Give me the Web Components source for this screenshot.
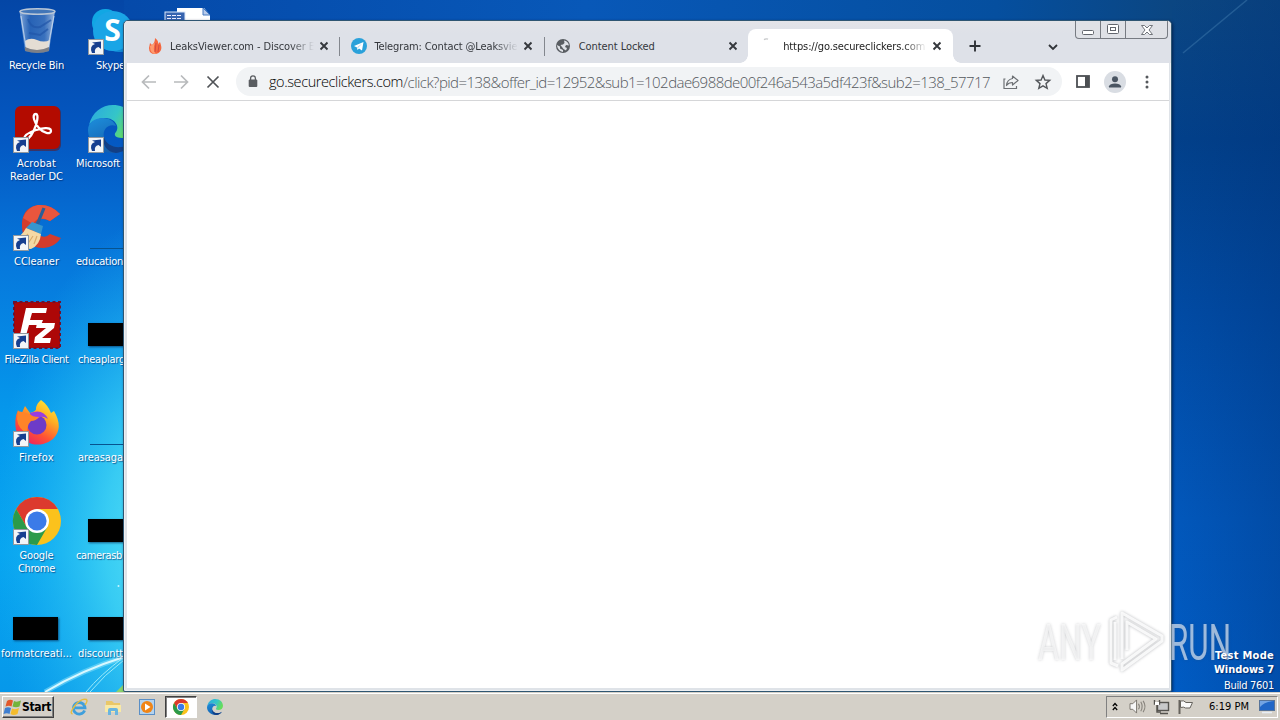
<!DOCTYPE html>
<html lang="en">
<head>
<meta charset="utf-8">
<title>Desktop</title>
<style>
  html, body { margin: 0; width: 1280px; height: 720px; overflow: hidden; }
  body { font-family: "DejaVu Sans Condensed", "DejaVu Sans", sans-serif; font-size: 11px; }
</style>
</head>
<body>
<win-desktop>
  <desktop-icons></desktop-icons>
  <browser-window slot="window"></browser-window>
  <build-mark slot="overlay"></build-mark>
  <task-bar slot="taskbar"></task-bar>
</win-desktop>

<script>
const chromeArt = `
  <circle cx="24" cy="24" r="24" fill="#fbc21c"/>
  <path d="M3.2 12A24 24 0 0 1 44.8 12H24L13.6 30Z" fill="#dc3a2e"/>
  <path d="M3.2 12A24 24 0 0 0 24 48L34.4 30 24 34 13.6 30Z" fill="#2b9a4a"/>
  <circle cx="24" cy="24" r="12" fill="#fff"/><circle cx="24" cy="24" r="9.6" fill="#3b7be8"/>`;

const edgeArt = `
  <defs>
    <linearGradient id="e1" x1="0" y1="0" x2="1" y2=".4"><stop offset="0" stop-color="#2aa8e0"/><stop offset=".6" stop-color="#35c5c8"/><stop offset="1" stop-color="#66dd5c"/></linearGradient>
    <linearGradient id="e2" x1="0" y1="0" x2=".6" y2="1"><stop offset="0" stop-color="#1d8fdc"/><stop offset="1" stop-color="#1459a8"/></linearGradient>
  </defs>
  <path d="M1 20C4 7 14 0 25 0c14 0 23 10 23 20 0 8-6 13-14 13-6 0-9-3-6-6 4-5-1-14-11-14C9 13 3 17 1 20Z" fill="url(#e1)"/>
  <path d="M0 25c0-8 7-12 15-12 6 0 11 3 13 8-7-3-14 3-12 11 2 7 9 11 17 10 5 0 9-2 12-4-5 7-12 10-20 10C11 48 0 37 0 25Z" fill="url(#e2)"/>
  <path d="M16 32c2 7 9 11 17 10 5 0 9-2 12-4-4 6-10 9-17 10-9-1-14-8-12-16Z" fill="#123f86"/>`;

// Every glyph used on the page: [viewBox, markup]
const ICONS = {
  recycle: ["0 0 48 48", `
    <defs><linearGradient id="g" x1="0" x2="1"><stop offset="0" stop-color="#b4cdec" stop-opacity=".75"/><stop offset=".3" stop-color="#3f74bd" stop-opacity=".6"/><stop offset=".7" stop-color="#5585c6" stop-opacity=".65"/><stop offset="1" stop-color="#c0d2ea" stop-opacity=".85"/></linearGradient></defs>
    <path d="M6.500 4H42L36 44Q25 48 12 44Z" fill="url(#g)"/>
    <ellipse cx="24.5" cy="4.500" rx="17.5" ry="2.800" fill="#4276b8" stroke="#b9c6d6" stroke-width="1.500"/>
    <path d="M12 34Q17 30 24 33T37 33L36 41Q25 47 13 41Z" fill="#e4ddd4"/>
    <path d="M12 40Q24 46 36 40V44Q25 48 12 44Z" fill="#7d8087"/>
    <path d="M15 12Q18 22 27 20L38 13M16 26L27 28 35 22" fill="none" stroke="#2155a8" stroke-width="2" opacity=".7"/>
    <path d="M8 9L13 40M41 9L35 40" stroke="#d3e2f3" stroke-width="1.2" opacity=".7"/>`],
  skype: ["0 0 48 48", `<rect x="4" y="2" width="27" height="27" rx="13" fill="#11a7e4"/><rect x="17" y="18" width="29" height="27" rx="13" fill="#1188d2"/><circle cx="25" cy="24" r="20" fill="#1aa5e6"/>
    <text x="24.5" y="34" text-anchor="middle" font-family="Open Sans,sans-serif" font-weight="700" font-size="30" fill="#fff">S</text>`],
  acrobat: ["0 0 48 48", `<rect x="3" y="2" width="45" height="44" rx="6" fill="#5d1a28" opacity=".6"/><rect x="2" y="1" width="45" height="43" rx="6" fill="#b30b00"/>
    <path d="M23 9c-5 0-1 10 3 14 4 5 12 7 12 3 0-5-11-2-15-1-6 2-12 5-12 9 1 4 7-2 10-9 3-6 5-16 2-16Z" fill="none" stroke="#fff" stroke-width="2.3"/>`],
  edge: ["0 0 48 48", edgeArt],
  ccleaner: ["0 0 48 48", `
    <path d="M47 11Q38 1 25 2 8 5 9 24 10 45 31 45 42 44 48 35L37 31Q33 35 28 33 20 30 22 21 26 13 37 18Z" fill="#d33c2d"/>
    <path d="M47 11Q38 1 25 2 14 4 10 15L20 21Q25 12 37 18Z" fill="#e9563d"/>
    <path d="M31 5L24 22" stroke="#285f98" stroke-width="3.2"/><path d="M19 19L30 23 28 31 13 25Z" fill="#3596cf"/>
    <path d="M13 25L28 31Q27 42 18 46 6 46 0 37 9 33 13 25Z" fill="#f5d9a4"/><path d="M15 31L8 39M20 33L14 42M24 33L21 41" stroke="#d9ab6a" stroke-width="1.2"/>`],
  filezilla: ["0 0 48 48", `<rect x="1" y="1" width="46" height="46" fill="#ad0707"/><rect x="1" y="1" width="46" height="46" fill="none" stroke="#6b1230" stroke-width="2" stroke-dasharray="3 2.5"/>
    <path d="M13 7H34L33 12H19L17 19H30L28 24H16L12 38H6Z" fill="#fff"/><path d="M24 22H42L41 27 29 37H38L37 42H21L22 36 33 27H23Z" fill="#fff"/>`],
  firefox: ["0 0 48 48", `
    <defs><linearGradient id="f" x1=".85" y1="0" x2=".25" y2="1"><stop offset="0" stop-color="#fff23d"/><stop offset=".35" stop-color="#ffae22"/><stop offset=".7" stop-color="#ff5035"/><stop offset="1" stop-color="#e91e68"/></linearGradient></defs>
    <path d="M28 1Q35 6 38 14L41 12Q51 29 40 40A23 22 0 0 1 3 31Q1 20 5 11L8 16 12 7 17 14Q24 12 23 9 24 4 28 1Z" fill="url(#f)"/>
    <circle cx="24" cy="26" r="9.500" fill="#6d3bc8"/><path d="M17 14Q30 9 35 20 29 16 26 19L17 21Z" fill="#993de0"/>
    <path d="M5 12L17 15Q19 18 26 18 23 22 18 22 13 27 15 35 5 30 4 20Z" fill="#ff8428"/>`],
  chrome: ["0 0 48 48", chromeArt],
  shortcut: ["0 0 16 16", `<rect x=".5" y=".5" width="15" height="15" fill="#f2f5f8" stroke="#92989f"/><path d="M4 14Q1 7 7 5L4 3.500 13 2.500V10L10.500 8Q6 9 7 14Z" fill="#163f8f"/>`],
  doc: ["0 0 48 30", `<path d="M12 1H39L45 8V30H12Z" fill="#fff"/><path d="M38 1V8H45Z" fill="#b9cbea" stroke="#477bc0"/><rect x="0" y="5" width="20" height="25" fill="#3764b0" stroke="#dce8fa"/><path d="M2 8.500H17M2 11.500H17" stroke="#eef" stroke-width="1.200" stroke-dasharray="4 1"/>`],
  flame: ["0 0 16 16", `<path d="M8 0Q12 3 11 6L13 4Q15 9 14 12 12 16 8 16 2 16 2 10L3 5 5 7Q8 5 8 0Z" fill="#f5683f"/><path d="M3 8Q3 16 9 16 5 12 8 5 5 7 3 8Z" fill="#ff9c70"/><path d="M9 5L8 14M12 7L11 14" stroke="#c94343" stroke-width=".8"/>`],
  telegram: ["0 0 16 16", `<circle cx="8" cy="8" r="8" fill="#2aa1da"/><path d="M3 8L12.500 4 11 12.500 8 10.500 6.500 12 6 9.500Z" fill="#fff"/><path d="M6 9.500L11 5.500 7 10Z" fill="#a9cfe4"/>`],
  globe: ["0 0 16 16", `<circle cx="8" cy="8" r="7" fill="#595d62"/><path d="M1.800 7L5 8.500V10.500L8 12V14Q3 13 1.800 7ZM7 9L5.500 7 8 6.500 9.500 5 9 2.500Q13 3 14 7.500L11 7 10 9 12 10 11 12.500 8.500 11Z" fill="#dee1e6"/>`],
  spin: ["0 0 16 16", `<path d="M4 1.600Q6 .2 8 1.200" fill="none" stroke="#c6c8ca" stroke-width="1.300"/>`],
  x: ["0 0 10 10", `<path d="M1.500 1.500L8.500 8.500M8.500 1.500L1.500 8.500" stroke="#35383d" stroke-width="1.900"/>`],
  plus: ["0 0 12 12", `<path d="M6 .5V11.500M.5 6H11.500" stroke="#303338" stroke-width="1.900"/>`],
  down: ["0 0 10 6", `<path d="M1 1L5 5 9 1" fill="none" stroke="#303338" stroke-width="1.800"/>`],
  back: ["0 0 16 16", `<path d="M15 8H2M8 1.500L1.500 8 8 14.500" fill="none" stroke="#b8babc" stroke-width="1.700"/>`],
  forward: ["0 0 16 16", `<path d="M1 8H14M8 1.500L14.500 8 8 14.500" fill="none" stroke="#b8babc" stroke-width="1.700"/>`],
  stop: ["0 0 14 14", `<path d="M1.500 1.500L12.500 12.500M12.500 1.500L1.500 12.500" stroke="#505357" stroke-width="1.700"/>`],
  lock: ["0 0 10 13", `<rect x=".7" y="4.500" width="8.600" height="7.500" rx="1" fill="#5a5d61"/><path d="M2.600 5V3.300A2.400 2.400 0 0 1 7.400 3.300V5" fill="none" stroke="#5a5d61" stroke-width="1.300"/>`],
  share: ["0 0 16 16", `<path d="M2.500 5H1V14.500H13.500V12" fill="none" stroke="#6d7074" stroke-width="1.200"/><path d="M9.500 2L15 6.500 9.500 11V8.500Q5.500 8.500 3.500 11.500 4 5.500 9.500 4.500Z" fill="none" stroke="#6d7074" stroke-width="1.200" stroke-linejoin="round"/>`],
  star: ["0 0 16 16", `<path d="M8 1.500L9.900 6 14.700 6.400 11 9.600 12.200 14.300 8 11.800 3.800 14.300 5 9.600 1.300 6.400 6.100 6Z" fill="none" stroke="#54575b" stroke-width="1.400"/>`],
  panel: ["0 0 14 13", `<rect x="1" y="1" width="12" height="11" fill="none" stroke="#4c4f53" stroke-width="1.800"/><rect x="9" y="1" width="4" height="11" fill="#4c4f53"/>`],
  avatar: ["0 0 22 22", `<circle cx="11" cy="11" r="11" fill="#d9dde3"/><circle cx="11" cy="8.200" r="3" fill="#4a5562"/><path d="M5 16.500V15.200Q6 12.500 11 12.500T17 15.200V16.500Z" fill="#4a5562"/>`],
  dots: ["0 0 4 14", `<circle cx="2" cy="2" r="1.500" fill="#55585c"/><circle cx="2" cy="7" r="1.500" fill="#55585c"/><circle cx="2" cy="12" r="1.500" fill="#55585c"/>`],
  min: ["0 0 12 12", `<rect x=".5" y="6.500" width="11" height="4" rx="1" fill="#fff" stroke="#62666d"/>`],
  max: ["0 0 12 11" , `<rect x=".5" y=".5" width="11" height="9" rx="1" fill="#fff" stroke="#62666d"/><rect x="3.500" y="3.500" width="5" height="3" fill="none" stroke="#62666d"/>`],
  shut: ["0 0 12 10", `<path d="M.5.500H3.500L6 3 8.500.500H11.500L8 5 11.500 9.500H8.500L6 7 3.500 9.500H.5L4 5Z" fill="#fff" stroke="#62666d" stroke-width=".9"/>`],
  flag: ["0 0 16 16", `<path d="M2 2Q5 0 8 1.500L6.500 7.500Q4 6 .5 7.500Z" fill="#e2582a"/><path d="M9 2Q12 3.500 16 1.500L14.500 7.500Q11 9 7.500 7.500Z" fill="#73b43c"/><path d="M0 9Q3 7.500 6 9L4.500 15Q2 13.500-1.500 15Z" fill="#3f7fd0"/><path d="M7 9.500Q10.500 11 14 9L12.500 15Q8.500 17 5.500 15Z" fill="#f4bc2c"/>`],
  ie: ["0 0 18 18", `<path d="M14.600 12.500A5.800 5.800 0 1 1 15 9.800H5" fill="none" stroke="#3f9fdc" stroke-width="2.800"/><path d="M2.500 16Q-1 15 5 7.500T16.500 1.500Q18 3 15 7" fill="none" stroke="#e6bd3e" stroke-width="1.400"/>`],
  folder: ["0 0 18 18", `<path d="M2 3H8L10 5H16V14H2Z" fill="#e9c767"/><path d="M1 7H17V14H1Z" fill="#f9e9a5"/><path d="M4 17V12Q4 10 6 10H12Q14 10 14 12V17H11V13H7V17Z" fill="#6ab5df"/>`],
  media: ["0 0 18 18", `<rect x="1.500" y="1.500" width="15" height="15" fill="#b4d3ee" stroke="#5a8fc6"/><circle cx="9" cy="9" r="6" fill="#f08516"/><path d="M7 5.500L12.500 9 7 12.500Z" fill="#fff"/>`],
  up: ["0 0 6 9", `<path d="M.8 4L3 1.500 5.200 4M.8 8L3 5.500 5.200 8" fill="none" stroke="#000" stroke-width="1.200"/>`],
  sound: ["0 0 18 16", `<path d="M1 5H4L8 1V15L4 11H1Z" fill="#f7f7f7" stroke="#77736c"/><path d="M10 5Q12 8 10 11M12.500 3Q15.500 8 12.500 13M15 2Q19 8 15 14" fill="none" stroke="#88847d" stroke-width="1.200"/>`],
  net: ["0 0 17 16", `<rect x="4.500" y="3.500" width="11" height="8" fill="#c8c9ca" stroke="#55534f" stroke-width="1.400"/><path d="M7 14.500H15" stroke="#55534f" stroke-width="1.500"/><path d="M1.500 1V5H6.500V1M4 5V13H8" fill="none" stroke="#55534f" stroke-width="1.400"/><rect x="2" y="3" width="4" height="3" fill="#fff"/>`],
  action: ["0 0 17 16", `<path d="M2.500 1V15" stroke="#66635d" stroke-width="2"/><path d="M3.500 2Q7 1 9 3.500H15.500L13 9H8.500Q7 7.500 3.500 8.500Z" fill="#fafafa" stroke="#66635d"/>`],
  show: ["0 0 16 14", `<rect x=".5" y=".5" width="15" height="10" fill="#2167c7" stroke="#587499"/><path d="M1 1H15Q5 2 1 7Z" fill="#73a4e3"/><path d="M3 12.500H13" stroke="#e7edf4" stroke-width="1.600"/>`]
};

// <ui-icon name w h>: one glyph from ICONS
class UiIcon extends HTMLElement {
  constructor() {
    super();
    this.attachShadow({ mode: "open" });
  }

  connectedCallback() {
    const [box, art] = ICONS[this.getAttribute("name")];
    const w = this.getAttribute("w") || 16;
    const h = this.getAttribute("h") || w;
    this.shadowRoot.innerHTML = `
      <style>
        :host { display: block; flex: none; width: ${w}px; height: ${h}px; }
        svg { display: block; width: 100%; height: 100%; overflow: visible; }
      </style>
      <svg viewBox="${box}">${art}</svg>`;
  }
}
customElements.define("ui-icon", UiIcon);

// <fit-text w>: tracks its line out (or in) to the given width
class FitText extends HTMLElement {
  constructor() {
    super();
    this.attachShadow({ mode: "open" });
    this.shadowRoot.innerHTML = `<style>:host { display: inline-block; white-space: nowrap; flex: none; }</style><slot></slot>`;
  }

  connectedCallback() {
    const w = parseFloat(this.getAttribute("w"));
    const n = this.textContent.length;
    if (!w || !n) return;
    const natural = this.getBoundingClientRect().width;
    this.style.letterSpacing = `${(w - natural) / n}px`;
  }
}
customElements.define("fit-text", FitText);

class WinDesktop extends HTMLElement {
  constructor() {
    super();
    this.attachShadow({ mode: "open" });
    this.shadowRoot.innerHTML = `
      <style>
        :host { display: flex; flex-direction: column; position: relative; width: 1280px; height: 720px; overflow: hidden; }
        .area { flex: 1; min-height: 0; position: relative; overflow: hidden; }
        .wall { position: absolute; inset: 0; }
      </style>
      <div class="area">
        <svg class="wall" width="1280" height="692">
          <defs>
            <linearGradient id="l" x1="0" y1="0" x2="0" y2="1">
              <stop offset="0" stop-color="#0446a6"/><stop offset=".2" stop-color="#0458c2"/>
              <stop offset=".38" stop-color="#0678dc"/><stop offset=".6" stop-color="#0598ec"/>
              <stop offset=".8" stop-color="#07a5f0"/><stop offset="1" stop-color="#0698ea"/>
            </linearGradient>
            <linearGradient id="r" x1="0" y1="0" x2="0" y2="1">
              <stop offset="0" stop-color="#0b4682"/><stop offset=".2" stop-color="#02408a"/>
              <stop offset=".45" stop-color="#014ba4"/><stop offset=".75" stop-color="#0258bc"/>
              <stop offset="1" stop-color="#015cc4"/>
            </linearGradient>
            <linearGradient id="top" gradientUnits="userSpaceOnUse" x1="0" x2="1172"><stop offset="0" stop-color="#0446a6"/><stop offset=".5" stop-color="#0858b8"/><stop offset=".85" stop-color="#054f9f"/><stop offset="1" stop-color="#0b4682"/></linearGradient>
            <radialGradient id="glow" gradientUnits="userSpaceOnUse" cx="180" cy="540" r="220" gradientTransform="translate(180 540) scale(.85 1.5) translate(-180 -540)">
              <stop offset="0" stop-color="#66e8f6"/><stop offset=".4" stop-color="#48daf5" stop-opacity=".75"/><stop offset="1" stop-color="#20b8f3" stop-opacity="0"/>
            </radialGradient>
            <linearGradient id="dark"><stop offset="0" stop-color="#012e72" stop-opacity="0"/><stop offset="1" stop-color="#012e72" stop-opacity=".3"/></linearGradient>
          </defs>
          <rect width="640" height="692" fill="url(#l)"/>
          <rect x="640" width="640" height="692" fill="url(#r)"/>
          <rect x="124" width="1048" height="24" fill="url(#top)"/>
          <rect width="400" height="692" fill="url(#glow)"/>
          <rect x="1172" width="108" height="692" fill="url(#dark)"/>
          <path d="M1183 53L1247 0" stroke="#4b86b7" stroke-width="1.500" opacity=".4"/>
          <path d="M45 692Q82 670 124 657" fill="none" stroke="#8fe4fb" stroke-width="5" opacity=".5"/>
          <path d="M45 692Q82 670 124 657" fill="none" stroke="#d8f8ff" stroke-width="2"/>
          <path d="M86 692Q100 675 124 657M90 692Q104 675 124 660" fill="none" stroke="#9ceafa" stroke-width="1"/>
          <path d="M116 692L124 684V692Z" fill="#8ad46c"/>
          <circle cx="118.500" cy="586" r="1" fill="#c8f6ff"/>
        </svg>
        <slot></slot>
        <slot name="window"></slot>
        <slot name="overlay"></slot>
      </div>
      <slot name="taskbar"></slot>`;
  }
}
customElements.define("win-desktop", WinDesktop);

class DesktopIcons extends HTMLElement {
  constructor() {
    super();
    this.attachShadow({ mode: "open" });
  }

  item(icon, lines, align = "center") {
    const art = icon === "black"
      ? `<div class="thumb"></div>`
      : icon === "line"
        ? `<div class="rule"></div>`
        : `<ui-icon name="${icon}" w="48"></ui-icon>`;
    const arrow = /recycle|black|line/.test(icon) ? "" : `<ui-icon class="arrow" name="shortcut" w="16"></ui-icon>`;
    return `
      <div class="item">
        <div class="art">${art}${arrow}</div>
        <div class="label ${align}">${lines.map(([t, w, pad = 0]) => `<fit-text w="${w}" style="margin-left:${pad}px">${t}</fit-text>`).join("")}</div>
      </div>`;
  }

  connectedCallback() {
    this.shadowRoot.innerHTML = `
      <style>
        :host { display: flex; position: relative; height: 100%; color: #fff; }
        .col { width: 75px; flex: none; padding-top: 7px; box-sizing: border-box; }
        .col:first-child { margin-left: -1px; }
        .item { height: 98px; }
        .art { position: relative; width: 48px; height: 48px; margin-left: 14px; display: flex; align-items: center; }
        .arrow { position: absolute; left: 0; bottom: 0; }
        .label { display: flex; flex-direction: column; align-items: center; line-height: 13px; margin-top: 4px; text-shadow: 1px 1px 1px rgba(0, 30, 90, .6); }
        .left { align-items: flex-start; }
        .thumb { width: 45px; height: 23px; margin-top: 19px; background: #000; box-shadow: 1px 1px 2px rgba(0, 20, 60, .6); }
        .rule { align-self: flex-end; width: 45px; height: 1px; margin: 0 0 2px 2px; background: #07538f; }
        .shift { transform: translateX(-1px); }
      </style>
      <div class="col shift">
        ${this.item("recycle", [["Recycle Bin", 55]])}
        ${this.item("acrobat", [["Acrobat", 39], ["Reader DC", 53]])}
        ${this.item("ccleaner", [["CCleaner", 45]])}
        ${this.item("filezilla", [["FileZilla Client", 64]])}
        ${this.item("firefox", [["Firefox", 35]])}
        ${this.item("chrome", [["Google", 34], ["Chrome", 37]])}
        ${this.item("black", [["formatcreati...", 71]])}
      </div>
      <div class="col shift">
        ${this.item("skype", [["Skype", 29, 22]], "left")}
        ${this.item("edge", [["Microsoft", 44, 2]], "left")}
        ${this.item("line", [["education", 47, 2]], "left")}
        ${this.item("black", [["cheaplarg", 47, 4]], "left")}
        ${this.item("line", [["areasaga", 45, 4]], "left")}
        ${this.item("black", [["camerasb", 46, 2]], "left")}
        ${this.item("black", [["discountt", 45, 4]], "left")}
      </div>
      <div class="col"><ui-icon name="doc" w="48" h="30" style="margin-left:15px"></ui-icon></div>`;
  }
}
customElements.define("desktop-icons", DesktopIcons);

class BrowserTab extends HTMLElement {
  constructor() {
    super();
    this.attachShadow({ mode: "open" });
  }

  connectedCallback() {
    this.shadowRoot.innerHTML = `
      <style>
        :host { display: flex; align-items: center; box-sizing: border-box; position: relative; flex: none; width: 204.4px; height: 34px; padding-left: 11.5px; color: #34373c; }
        :host([active]) { background: #fff; border-radius: 8px 8px 0 0; color: #222; }
        :host([active])::before, :host([active])::after { content: ""; position: absolute; bottom: 0; width: 8px; height: 8px; background: radial-gradient(circle at 0 0, transparent 7.5px, #fff 8px); }
        :host([active])::before { left: -8px; }
        :host([active])::after { right: -8px; transform: scaleX(-1); }
        :host([divided])::after { content: ""; position: absolute; right: -1px; top: 8px; width: 1px; height: 19px; background: #83878e; }
        .title { width: 144px; margin: 1px 5px 0 7.5px; overflow: hidden; white-space: nowrap; line-height: 16px; }
        .fade { -webkit-mask-image: linear-gradient(90deg, #000 120px, transparent 144px); mask-image: linear-gradient(90deg, #000 120px, transparent 144px); }
      </style>
      <ui-icon name="${this.getAttribute("icon")}" w="16"></ui-icon>
      <div class="title ${this.hasAttribute("long") ? "fade" : ""}"><slot></slot></div>
      <ui-icon name="x" w="10"></ui-icon>`;
  }
}
customElements.define("browser-tab", BrowserTab);

class BrowserWindow extends HTMLElement {
  constructor() {
    super();
    this.attachShadow({ mode: "open" });
  }

  connectedCallback() {
    this.shadowRoot.innerHTML = `
      <style>
        :host {
          display: flex; flex-direction: column; box-sizing: border-box;
          position: absolute; left: 123px; top: 20px; width: 1049px; height: 672px;
          border: 1px solid #2f5672; border-radius: 5px 5px 2px 2px; background: #dfe3e8;
          padding: 0 2px 3px 3px; overflow: hidden;
          box-shadow: inset 0 0 0 1px #eceff2, 1px 1px 3px rgba(0, 15, 50, .6);
        }
        .strip { display: flex; height: 42px; flex: none; padding: 8px 0 0 10px; box-sizing: border-box; position: relative; background: linear-gradient(#e3e4e8, #dee1e8 12px); margin: 0 -2px 0 -2px; }
        .tools { display: flex; align-items: center; flex: 1; }
        .plus { margin-left: 16.500px; }
        .down { margin-left: 67px; margin-top: 1px; }
        .caption { position: absolute; right: 3px; top: 0; display: flex; height: 17px; border: 1px solid #777b82; border-top: 0; border-radius: 0 0 4px 4px; background: #dfe1e6; }
        .caption div { display: flex; align-items: center; justify-content: center; width: 24px; border-right: 1px solid #777b82; }
        .caption div:last-child { width: 41px; border: 0; }
        .bar { display: flex; align-items: center; height: 38px; flex: none; box-sizing: border-box; background: #fff; border-bottom: 1px solid #d5d6d8; padding-left: 14px; gap: 16px; }
        .omni { display: flex; align-items: center; box-sizing: border-box; width: 826px; height: 29px; border-radius: 15px; background: #f1f3f5; padding-left: 12px; margin-left: -1px; }
        .url { display: flex; margin-left: 11px; width: 734px; font: 300 15px/20px "Open Sans", "Noto Sans", sans-serif; color: #54585d; }
        .host { color: #000; font-size: 14.500px; }
        .page { flex: 1; background: #fff; }
      </style>
      <div class="strip">
        <browser-tab icon="flame" divided long><fit-text w="145">LeaksViewer.com - Discover E</fit-text></browser-tab>
        <browser-tab icon="telegram" divided long><fit-text w="143">Telegram: Contact @Leaksvie</fit-text></browser-tab>
        <browser-tab icon="globe"><fit-text w="76">Content Locked</fit-text></browser-tab>
        <browser-tab icon="spin" active long><fit-text w="142">https://go.secureclickers.com</fit-text></browser-tab>
        <div class="tools">
          <ui-icon class="plus" name="plus" w="12"></ui-icon>
          <ui-icon class="down" name="down" w="10" h="6"></ui-icon>
        </div>
        <div class="caption">
          <div><ui-icon name="min" w="12"></ui-icon></div>
          <div><ui-icon name="max" w="12" h="11"></ui-icon></div>
          <div><ui-icon name="shut" w="12" h="10"></ui-icon></div>
        </div>
      </div>
      <div class="bar">
        <ui-icon name="back" w="16"></ui-icon>
        <ui-icon name="forward" w="16"></ui-icon>
        <ui-icon name="stop" w="14" style="margin:0 1px"></ui-icon>
        <div class="omni">
          <ui-icon name="lock" w="10" h="13"></ui-icon>
          <div class="url"><fit-text class="host" w="134">go.secureclickers.com</fit-text><fit-text w="587">/click?pid=138&amp;offer_id=12952&amp;sub1=102dae6988de00f246a543a5df423f&amp;sub2=138_57717</fit-text></div>
          <ui-icon name="share" w="16"></ui-icon>
          <ui-icon name="star" w="16" style="margin-left:16px"></ui-icon>
        </div>
        <ui-icon name="panel" w="14" h="13" style="margin-left:-2px"></ui-icon>
        <ui-icon name="avatar" w="22" style="margin-left:-2px"></ui-icon>
        <ui-icon name="dots" w="4" h="14" style="margin-left:3px"></ui-icon>
      </div>
      <div class="page"></div>`;
  }
}
customElements.define("browser-window", BrowserWindow);

// Watermark logo and the build text in the bottom right corner
class BuildMark extends HTMLElement {
  constructor() {
    super();
    this.attachShadow({ mode: "open" });
  }

  connectedCallback() {
    this.shadowRoot.innerHTML = `
      <style>
        :host { display: block; position: absolute; right: 0; bottom: 0; width: 250px; height: 90px; }
        svg { position: absolute; left: 0; top: 0; filter: drop-shadow(0 0 1.500px rgba(70, 75, 85, .45)); }
        .build { position: absolute; right: 6px; bottom: -2px; display: flex; flex-direction: column; align-items: flex-end; color: #fff; text-shadow: 1px 1px 1px rgba(0, 20, 70, .6); line-height: 14px; }
        b { font-weight: 700; display: flex; }
        .last { line-height: 16px; margin-top: 1px; }
      </style>
      <svg width="250" height="90" fill="none">
        <g font-family="Roboto, Liberation Sans, sans-serif" font-size="50" fill="#fff" fill-opacity=".6">
          <text x="8" y="58" textLength="63" lengthAdjust="spacingAndGlyphs">ANY</text>
          <text x="139" y="58" textLength="62" lengthAdjust="spacingAndGlyphs">RUN</text>
        </g>
        <g stroke="#fff" stroke-opacity=".85" stroke-width="3" stroke-linejoin="round">
          <path d="M87 15L81 18V61L88 64M85 20V58"/>
          <path d="M92 57V11L132 34V39L92 68V62L126 37 97 20V48"/>
        </g>
      </svg>
      <div class="build">
        <b><fit-text w="59">Test Mode</fit-text></b>
        <b><fit-text w="60">Windows 7</fit-text></b>
        <fit-text class="last" w="50">Build 7601</fit-text>
      </div>`;
  }
}
customElements.define("build-mark", BuildMark);

class TaskBar extends HTMLElement {
  constructor() {
    super();
    this.attachShadow({ mode: "open" });
  }

  connectedCallback() {
    this.shadowRoot.innerHTML = `
      <style>
        :host { display: flex; align-items: center; box-sizing: border-box; height: 28px; flex: none; padding: 2px 2px 2px; background: #d4d0c8; border-top: 1px solid #d4d0c8; box-shadow: inset 0 1px #fff; color: #000; }
        .start { display: flex; align-items: center; gap: 1px; width: 52px; height: 22px; box-sizing: border-box; padding-left: 2px; border: 1px solid; border-color: #fff #404040 #404040 #fff; box-shadow: inset -1px -1px #808080; font-weight: 700; font-size: 12px; }
        .quick { display: flex; align-items: center; margin-left: 8px; }
        .quick div { display: flex; align-items: center; justify-content: center; width: 34px; height: 22px; }
        .quick .on { width: 32px; margin: 0 1px; box-sizing: border-box; background: #fff; border: 1px solid; border-color: #404040 #fff #fff #404040; box-shadow: inset 1px 1px #808080; }
        .tray { display: flex; align-items: center; box-sizing: border-box; width: 172px; height: 22px; margin-left: auto; padding: 0 2px 0 5px; border: 1px solid; border-color: #808080 #fff #fff #808080; }
      </style>
      <div class="start"><ui-icon name="flag" w="16"></ui-icon><fit-text w="29">Start</fit-text></div>
      <div class="quick">
        <div><ui-icon name="ie" w="18"></ui-icon></div>
        <div><ui-icon name="folder" w="18"></ui-icon></div>
        <div><ui-icon name="media" w="18"></ui-icon></div>
        <div class="on"><ui-icon name="chrome" w="16"></ui-icon></div>
        <div><ui-icon name="edge" w="16"></ui-icon></div>
      </div>
      <div class="tray">
        <ui-icon name="up" w="6" h="9"></ui-icon>
        <ui-icon name="sound" w="17" h="15" style="margin-left:11px"></ui-icon>
        <ui-icon name="net" w="17" h="16" style="margin-left:7px"></ui-icon>
        <ui-icon name="action" w="17" h="16" style="margin-left:7px"></ui-icon>
        <fit-text w="40" style="margin-left:15px">6:19 PM</fit-text>
        <ui-icon name="show" w="16" h="14" style="margin-left:auto"></ui-icon>
      </div>`;
  }
}
customElements.define("task-bar", TaskBar);
</script>
</body>
</html>
